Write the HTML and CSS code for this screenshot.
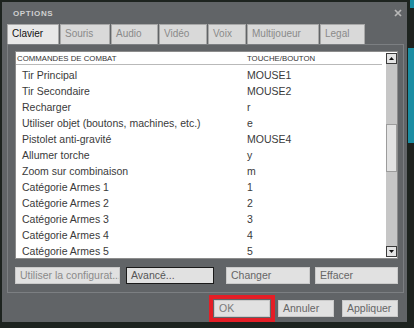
FILE: index.html
```
<!DOCTYPE html>
<html lang="fr">
<head>
    <meta charset="UTF-8">
    <meta name="viewport" content="width=device-width, initial-scale=1.0">
    <title>Options</title>
    <link rel="stylesheet" href="styles.css">
</head>
<body>
    <div class="dialog">
        <div class="titlebar">
            <span class="title">OPTIONS</span>
            <svg class="close" width="8" height="8" viewBox="0 0 8 8">
                <path d="M1 1 L7 7 M7 1 L1 7" stroke="#b8b8b8" stroke-width="1.7" fill="none"/>
            </svg>
        </div>
        <div class="tabs">
            <span class="tab active t-clavier">Clavier</span>
            <span class="tab t-souris">Souris</span>
            <span class="tab t-audio">Audio</span>
            <span class="tab t-video">Vidéo</span>
            <span class="tab t-voix">Voix</span>
            <span class="tab t-multi">Multijoueur</span>
            <span class="tab t-legal">Legal</span>
        </div>
        <div class="panel">
            <div class="list">
                <div class="rows">
                    <div class="head">
                        <span class="cmd">COMMANDES DE COMBAT</span>
                        <span class="key">TOUCHE/BOUTON</span>
                    </div>
                    <div class="row"><span class="cmd">Tir Principal</span><span class="key">MOUSE1</span></div>
                    <div class="row"><span class="cmd">Tir Secondaire</span><span class="key">MOUSE2</span></div>
                    <div class="row"><span class="cmd">Recharger</span><span class="key">r</span></div>
                    <div class="row"><span class="cmd">Utiliser objet (boutons, machines, etc.)</span><span class="key">e</span></div>
                    <div class="row"><span class="cmd">Pistolet anti-gravité</span><span class="key">MOUSE4</span></div>
                    <div class="row"><span class="cmd">Allumer torche</span><span class="key">y</span></div>
                    <div class="row"><span class="cmd">Zoom sur combinaison</span><span class="key">m</span></div>
                    <div class="row"><span class="cmd">Catégorie Armes 1</span><span class="key">1</span></div>
                    <div class="row"><span class="cmd">Catégorie Armes 2</span><span class="key">2</span></div>
                    <div class="row"><span class="cmd">Catégorie Armes 3</span><span class="key">3</span></div>
                    <div class="row"><span class="cmd">Catégorie Armes 4</span><span class="key">4</span></div>
                    <div class="row"><span class="cmd">Catégorie Armes 5</span><span class="key">5</span></div>
                </div>
                <div class="scrollbar">
                    <div class="sb-btn">
                        <svg width="9" height="9" viewBox="0 0 9 9"><path d="M2 6 L7 6 L4.5 3 Z" fill="#111"/></svg>
                    </div>
                    <div class="sb-track top"></div>
                    <div class="sb-thumb"></div>
                    <div class="sb-track rest"></div>
                    <div class="sb-btn">
                        <svg width="9" height="9" viewBox="0 0 9 9"><path d="M2 3 L7 3 L4.5 6 Z" fill="#111"/></svg>
                    </div>
                </div>
            </div>
            <div class="actions">
                <button class="btn b-config">Utiliser la configurat...</button>
                <button class="btn b-adv">Avancé...</button>
                <button class="btn b-change">Changer</button>
                <button class="btn b-clear">Effacer</button>
            </div>
        </div>
        <div class="footer">
            <button class="btn b-ok">OK</button>
            <button class="btn b-small">Annuler</button>
            <button class="btn b-small">Appliquer</button>
        </div>
    </div>
</body>
</html>
```

FILE: styles.css
```
body {
    margin: 0;
    width: 414px;
    height: 328px;
    overflow: hidden;
    font-family: "Liberation Sans", Arial, sans-serif;
    background:
        linear-gradient(#1a8ea3, #1a8ea3) no-repeat right 0 top 48px / 6px 95px,
        linear-gradient(#1a8ea3, #1a8ea3) no-repeat right 0 top 0 / 4px 8px,
        #1d231f;
}
.dialog {
    margin: 2px 0 0 2px;
    width: 405px;
    height: 320px;
    background-color: #616467;
    display: flex;
    flex-direction: column;
}
.titlebar {
    height: 22px;
    padding: 0 5px 0 11px;
    display: flex;
    align-items: center;
    justify-content: space-between;
}
.title {
    font-size: 8px;
    font-weight: bold;
    letter-spacing: 0.6px;
    color: #d0d0d0;
}
.close {
    display: block;
}
.tabs {
    height: 20px;
    padding-left: 5px;
    display: flex;
    gap: 1px;
}
.tab {
    box-sizing: border-box;
    height: 20px;
    line-height: 18px;
    padding-left: 4px;
    font-size: 10px;
    color: #8a8a8a;
    background-color: #d9d9d9;
    border: 1px solid #a8a8a8;
    border-bottom: none;
}
.tab.active {
    color: #111;
    background-color: #e8e8e8;
}
.t-clavier { width: 52px; }
.t-souris { width: 50px; }
.t-audio { width: 47px; }
.t-video { width: 48px; }
.t-voix { width: 38px; }
.t-multi { width: 72px; }
.t-legal { width: 45px; }
.panel {
    box-sizing: border-box;
    margin: 0 3px 0 5px;
    height: 249px;
    border: 1px solid #7c7f82;
    padding: 6px 5px 0 7px;
}
.list {
    box-sizing: border-box;
    height: 208px;
    background-color: #fff;
    border: 1px solid #8c8c8c;
    display: flex;
    overflow: hidden;
}
.rows {
    flex: 1;
    margin-right: 4px;
}
.head, .row {
    display: grid;
    grid-template-columns: 231px 1fr;
}
.head {
    height: 12px;
    line-height: 13px;
    font-size: 7.8px;
    color: #333;
    border-bottom: 1px solid #b9b9b9;
    margin-bottom: 2px;
}
.head .cmd {
    padding-left: 1px;
}
.row {
    height: 16px;
    line-height: 16px;
    font-size: 10.5px;
    color: #3a3a3a;
    white-space: nowrap;
}
.row .cmd {
    padding-left: 6px;
}
.scrollbar {
    width: 11px;
    margin: 1px 0;
    display: flex;
    flex-direction: column;
}
.sb-btn {
    box-sizing: border-box;
    height: 11px;
    border: 1px solid #3c3c3c;
    background-color: #e4e4e4;
    display: flex;
    align-items: center;
    justify-content: center;
}
.sb-btn svg {
    display: block;
}
.sb-track {
    background-color: #c6c6c6;
}
.sb-track.top {
    height: 60px;
}
.sb-track.rest {
    flex: 1;
}
.sb-thumb {
    box-sizing: border-box;
    height: 48px;
    background-color: #e2e2e2;
    border: 1px solid #9c9c9c;
}
.actions {
    margin-top: 8px;
    display: flex;
}
.btn {
    box-sizing: border-box;
    height: 17px;
    margin: 0;
    padding: 0 0 0 4px;
    font-family: "Liberation Sans", Arial, sans-serif;
    font-size: 10.5px;
    line-height: 15px;
    text-align: left;
    color: #666;
    background-color: #e1e1e1;
    border: 1px solid #cacaca;
    white-space: nowrap;
    overflow: hidden;
}
.b-config {
    width: 105px;
    color: #8a8a8a;
}
.b-adv {
    width: 88px;
    margin-left: 6px;
    color: #555;
    border-color: #1a1a1a;
}
.b-change {
    width: 84px;
    margin-left: 12px;
}
.b-clear {
    width: 83px;
    margin-left: 5px;
}
.footer {
    margin-top: 7px;
    padding-right: 9px;
    display: flex;
    justify-content: flex-end;
    gap: 8px;
}
.b-ok {
    width: 56px;
    color: #7a7a7a;
    outline: 4px solid #e41e26;
    outline-offset: 1px;
}
.b-small {
    width: 56px;
}
```
